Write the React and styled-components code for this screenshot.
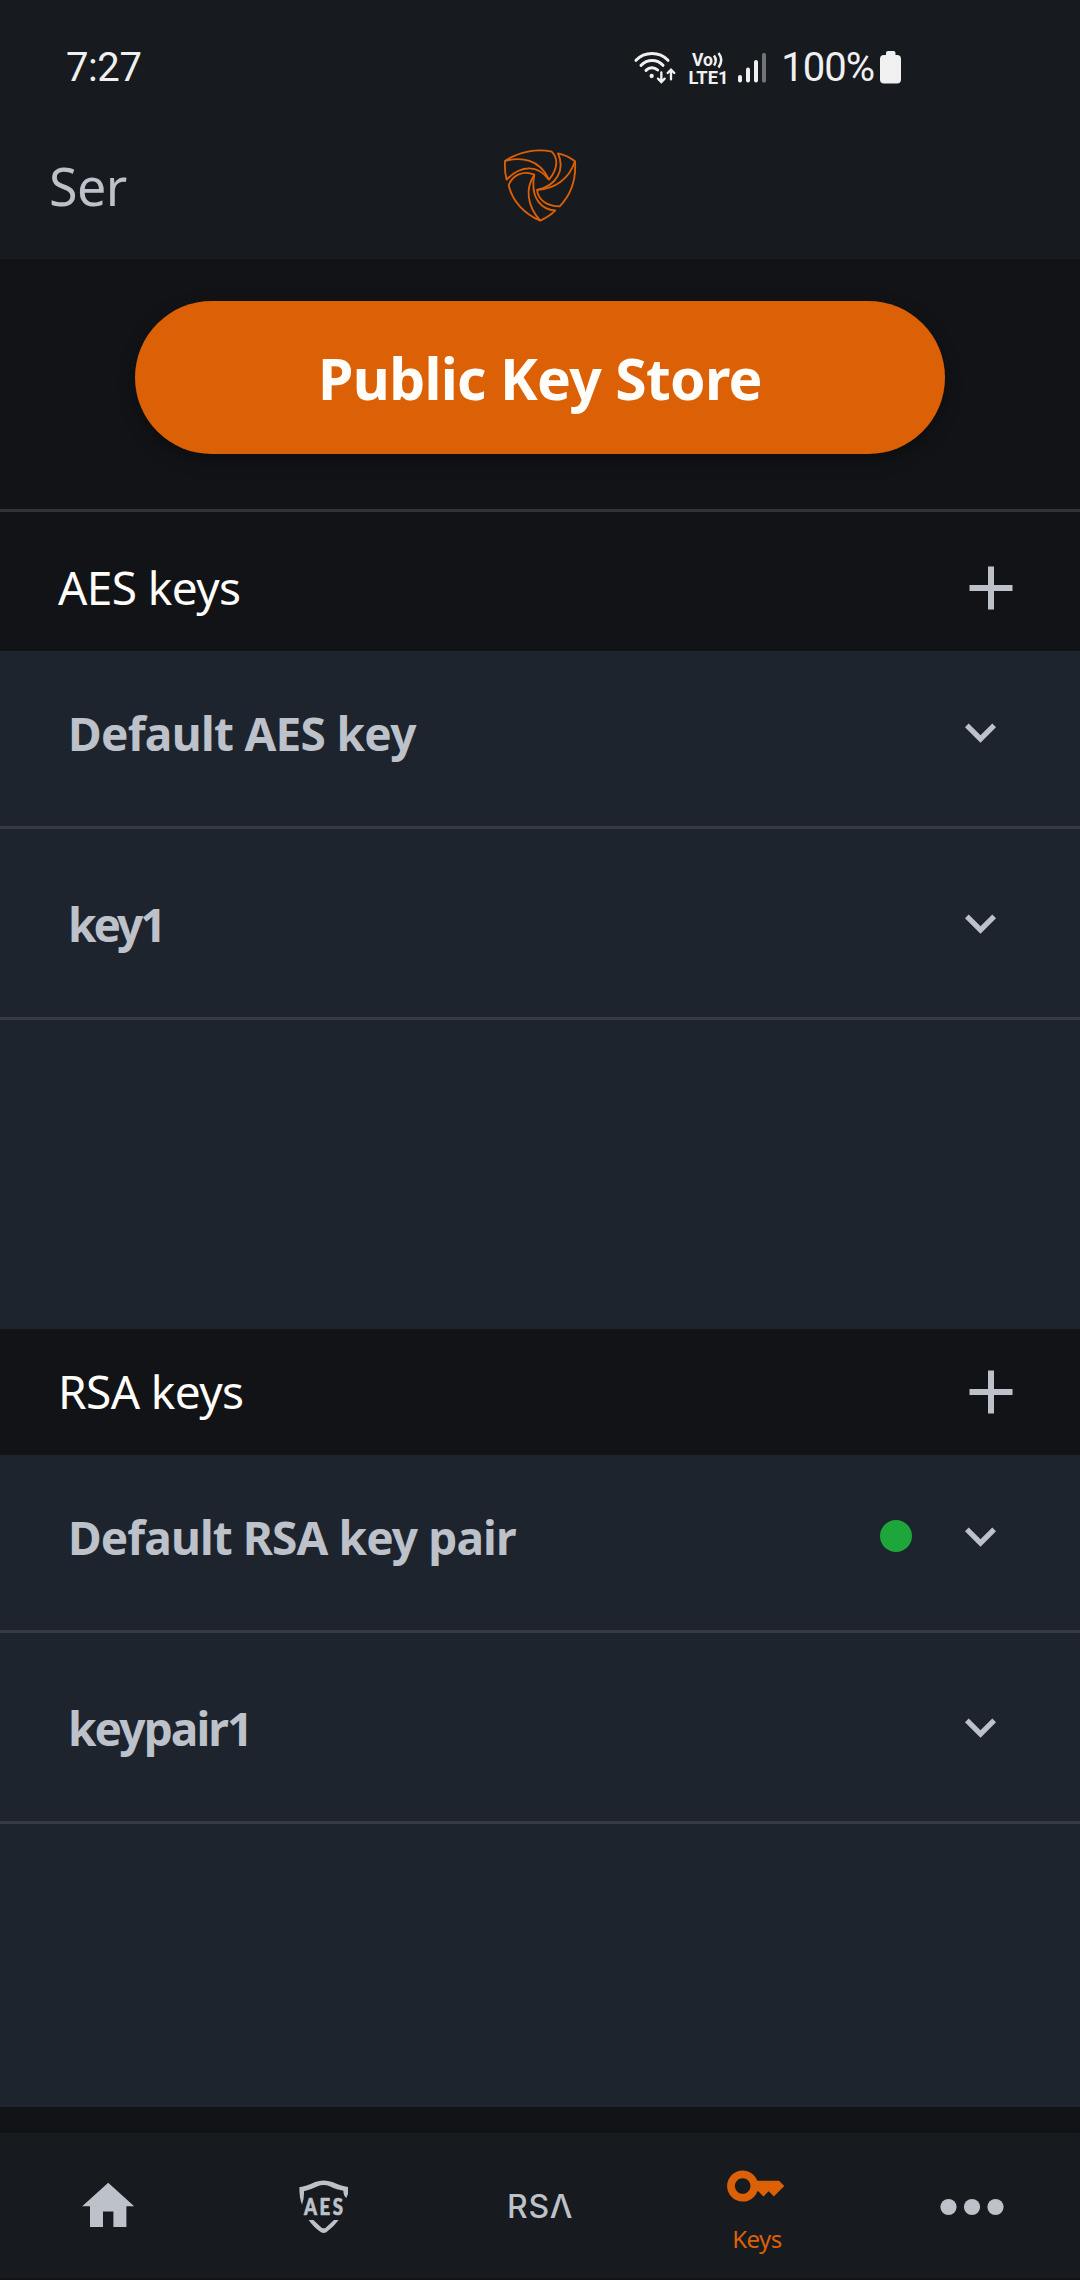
import React from "react";
import styled, { createGlobalStyle } from "styled-components";

const color = {
  bar: "#171a1e",
  page: "#121316",
  panel: "#1e242d",
  rule: "#323336",
  rowRule: "#363a42",
  text: "#bdc1c9",
  bright: "#fffdfa",
  accent: "#dc6006",
  ok: "#1ea63c",
};

const GlobalStyle = createGlobalStyle`
  * { box-sizing: border-box; }
  body { margin: 0; background: ${color.page}; }
  svg { display: block; flex: none; }
  button { border: 0; padding: 0; background: none; font: inherit; color: inherit; }
`;

const Screen = styled.div`
  width: 1080px;
  height: 2280px;
  display: flex;
  flex-direction: column;
  overflow: hidden;
  background: ${color.page};
  color: ${color.text};
  font-family: "Noto Sans", "Open Sans", sans-serif;
`;

const TopArea = styled.header`
  height: 259px;
  flex: none;
  background: ${color.bar};
`;

const StatusBar = styled.div`
  height: 134px;
  padding: 1px 179px 0 66px;
  display: flex;
  align-items: center;
  justify-content: space-between;
  font-family: Roboto, sans-serif;
  font-size: 40px;
  color: #f0f0f0;
`;

const StatusText = styled.span`
  line-height: 48px;
  padding-top: 1px;
  letter-spacing: ${(p) => p.$spacing || "-0.4px"};
`;

const StatusIcons = styled.div`
  display: flex;
  align-items: center;
`;

const StatusSvg = styled.svg`
  margin-right: ${(p) => p.$gap}px;
  overflow: visible;
`;

const BatterySvg = styled.svg`
  margin-left: 6px;
`;

const TitleBar = styled.div`
  height: 102px;
  padding: 0 49px;
  display: grid;
  grid-template-columns: 1fr auto 1fr;
  align-items: center;
`;

const BackLabel = styled.span`
  padding-top: 1px;
  font-size: 52px;
  line-height: 100px;
  letter-spacing: -0.6px;
`;

const Actions = styled.section`
  height: 253px;
  flex: none;
  padding-top: 42px;
  display: flex;
  justify-content: center;
  align-items: flex-start;
  border-bottom: 3px solid ${color.rule};
`;

const StoreButton = styled.button`
  width: 810px;
  height: 153px;
  border-radius: 77px;
  background: ${color.accent};
  color: ${color.bright};
  font-size: 57px;
  font-weight: 700;
  letter-spacing: -0.7px;
  box-shadow: 0 6px 18px rgba(0, 0, 0, 0.3);
`;

const KeySection = styled.section`
  flex: none;
  padding-top: ${(p) => p.$offset || 0}px;
`;

const SectionHeader = styled.div`
  height: 126px;
  padding: 0 67px 0 58px;
  display: flex;
  align-items: center;
  justify-content: space-between;
`;

const SectionTitle = styled.h2`
  margin: 0 0 2px;
  font-size: 46px;
  font-weight: 400;
  line-height: 60px;
  letter-spacing: -0.6px;
  color: ${color.bright};
`;

const KeyList = styled.div`
  height: ${(p) => p.$height}px;
  overflow: hidden;
  background: ${color.panel};
`;

const KeyRow = styled.div`
  height: 191px;
  padding: 2px 84px 0 68px;
  display: flex;
  align-items: center;
  border-bottom: 3px solid ${color.rowRule};

  &:first-child {
    margin-top: -13px;
  }
`;

const KeyName = styled.span`
  flex: 1;
  font-size: 46px;
  font-weight: 700;
  line-height: 60px;
  letter-spacing: ${(p) => p.$spacing}px;
`;

const ActiveDot = styled.span`
  width: 32px;
  height: 32px;
  margin: 0 53px 2px 0;
  border-radius: 50%;
  background: ${color.ok};
`;

const BottomNav = styled.nav`
  height: 147px;
  flex: none;
  margin-top: 26px;
  padding-top: 2px;
  display: grid;
  grid-template-columns: repeat(5, 1fr);
  background: ${color.bar};
  border-bottom: 2px solid ${color.page};
`;

const NavItem = styled.button`
  display: flex;
  flex-direction: column;
  align-items: center;
  justify-content: center;
  color: ${(p) => (p.$active ? color.accent : color.text)};
`;

const NavLabel = styled.span`
  font-size: 24px;
  line-height: 32px;
  letter-spacing: -0.5px;
  margin: 20px 0 -11px 2px;
`;

const RsaMark = styled.span`
  font-family: Inter, sans-serif;
  font-size: 32px;
  font-weight: 500;
  line-height: 40px;
  letter-spacing: 0.6px;
`;

function WifiIcon() {
  return (
    <StatusSvg $gap={12} width="42" height="36" viewBox="105 60 126 108" fill="none" stroke="#f0f0f0" strokeWidth="9" strokeLinecap="round">
      <path d="M111 91C137 64 181 64 207 91M126 106C145 87 174 87 192 106M141 121C151 111 166 111 176 120" />
      <circle cx="158" cy="138" r="6.500" fill="#f0f0f0" stroke="none" />
      <path strokeWidth="7" d="M187 127V155M177 146L187 156L197 146M216 148V120M206 129L216 119L226 129" />
    </StatusSvg>
  );
}

function VolteIcon() {
  return (
    <StatusSvg $gap={8} width="42" height="38" viewBox="0 0 42 38" fill="#f0f0f0" fontFamily="Roboto, sans-serif" fontWeight="700">
      <text x="4" y="17" fontSize="18" textLength="21" lengthAdjust="spacingAndGlyphs">Vo</text>
      <path d="M26 6.500q3.500 5 0 10M30.500 4q5.500 7 0 14.500" fill="none" stroke="#f0f0f0" strokeWidth="2.500" />
      <text x="0.500" y="35" fontSize="18.500" textLength="40" lengthAdjust="spacingAndGlyphs">LTE1</text>
    </StatusSvg>
  );
}

function SignalIcon() {
  return (
    <StatusSvg $gap={15} width="28" height="30" viewBox="0 0 28 30" fill="#f0f0f0">
      <rect x="0" y="22" width="4" height="7.500" rx="2" />
      <rect x="8" y="14.500" width="4" height="15" rx="2" />
      <rect x="16" y="7" width="4" height="22.500" rx="2" />
      <rect x="24" y="0" width="4" height="29.500" rx="1.500" fill="#717477" />
    </StatusSvg>
  );
}

function BatteryIcon() {
  return (
    <BatterySvg width="21" height="33" viewBox="0 0 21 33" fill="#f0f0f0">
      <rect x="6" y="0" width="9.500" height="8" rx="2" />
      <rect x="0" y="4" width="21" height="28.500" rx="4" />
    </BatterySvg>
  );
}

function Logo() {
  return (
    <svg width="74" height="74" viewBox="71 54 222 222" fill="none" stroke={color.accent} strokeWidth="5.500" strokeLinejoin="round">
      <path d="M77 93C118 65 172 55 217 65C238 86 235 118 209 149C176 105 126 103 82 149C77 132 76 112 77 93Z" />
      <path d="M77 93C125 80 181 87 209 149" />
      <path d="M165 134C131 120 100 136 88 165C98 214 137 253 183 272C199 264 216 254 228 241C190 240 151 208 165 134Z" />
      <path d="M165 134C137 176 143 228 183 272" />
      <path d="M236 70C256 74 273 83 287 94C291 150 273 196 241 229C203 228 177 211 173 180C232 168 258 119 236 70Z" />
      <path d="M173 180C226 177 269 148 287 94" />
    </svg>
  );
}

function PlusIcon() {
  return (
    <svg width="44" height="44" viewBox="0 0 44 44" fill={color.text}>
      <path d="M19 .5h6V19h18.500v6H25v18.500h-6V25H.5v-6H19z" />
    </svg>
  );
}

function ChevronIcon() {
  return (
    <svg width="31" height="20" viewBox="0 0 31 20" fill={color.text}>
      <path d="M3.700 .5L15.500 12.300L27.300 .5L31 4.200L15.500 19.700L0 4.200z" />
    </svg>
  );
}

function HomeIcon() {
  return (
    <svg width="62.400" height="62.400" viewBox="0 0 24 24" fill="currentColor">
      <path d="M10 20v-6h4v6h5v-8h3L12 3 2 12h3v8z" />
    </svg>
  );
}

function AesIcon() {
  return (
    <svg width="50" height="54" viewBox="87 90 150 162" fill="currentColor">
      <path d="M88 112Q108 109 135 96Q161 87 187 96Q213 108 234 111V132L229 144Q220 136 220 122Q202 120 179 109Q161 101 143 109Q121 120 102 124Q103 144 96 164Q88 145 88 112Z" />
      <path d="M116 210H130L155 233Q161 237 167 233L192 210H206Q192 230 169 247Q161 251 153 247Q130 231 116 210Z" />
      <text transform="translate(102 195) scale(0.82 1)" fontFamily="Lato, sans-serif" fontWeight="900" fontSize="68" letterSpacing="9" stroke="currentColor" strokeWidth="2" strokeLinejoin="round">AES</text>
    </svg>
  );
}

function KeyIcon() {
  return (
    <svg width="62.400" height="34" viewBox="0.200 5.500 24 13" fill="currentColor">
      <path d="M21 10h-8.350C11.830 7.670 9.610 6 7 6c-3.310 0-6 2.690-6 6s2.690 6 6 6c2.610 0 4.830-1.670 5.650-4H13l2 2 2-2 2 2 4-4.040L21 10zM7 15c-1.650 0-3-1.350-3-3s1.350-3 3-3 3 1.350 3 3-1.350 3-3 3z" />
    </svg>
  );
}

function MoreIcon() {
  return (
    <svg width="64" height="18" viewBox="0 0 64 18" fill="currentColor">
      <circle cx="8.500" cy="9" r="8.100" />
      <circle cx="32" cy="9" r="8.100" />
      <circle cx="55.500" cy="9" r="8.100" />
    </svg>
  );
}

const sections = [
  {
    title: "AES keys",
    offset: 13,
    height: 678,
    keys: [
      { name: "Default AES key", spacing: -0.7 },
      { name: "key1", spacing: -3 },
    ],
  },
  {
    title: "RSA keys",
    offset: 0,
    height: 652,
    keys: [
      { name: "Default RSA key pair", spacing: -0.9, active: true },
      { name: "keypair1", spacing: -1.9 },
    ],
  },
];

export default function App() {
  return (
    <Screen>
      <GlobalStyle />
      <TopArea>
        <StatusBar>
          <StatusText>7:27</StatusText>
          <StatusIcons>
            <WifiIcon />
            <VolteIcon />
            <SignalIcon />
            <StatusText $spacing="-1px">100%</StatusText>
            <BatteryIcon />
          </StatusIcons>
        </StatusBar>
        <TitleBar>
          <BackLabel>Ser</BackLabel>
          <Logo />
          <span />
        </TitleBar>
      </TopArea>
      <Actions>
        <StoreButton>Public Key Store</StoreButton>
      </Actions>
      {sections.map((section) => (
        <KeySection key={section.title} $offset={section.offset}>
          <SectionHeader>
            <SectionTitle>{section.title}</SectionTitle>
            <PlusIcon />
          </SectionHeader>
          <KeyList $height={section.height}>
            {section.keys.map((item) => (
              <KeyRow key={item.name}>
                <KeyName $spacing={item.spacing}>{item.name}</KeyName>
                {item.active && <ActiveDot />}
                <ChevronIcon />
              </KeyRow>
            ))}
          </KeyList>
        </KeySection>
      ))}
      <BottomNav>
        <NavItem><HomeIcon /></NavItem>
        <NavItem><AesIcon /></NavItem>
        <NavItem><RsaMark>RSΛ</RsaMark></NavItem>
        <NavItem $active>
          <KeyIcon />
          <NavLabel>Keys</NavLabel>
        </NavItem>
        <NavItem><MoreIcon /></NavItem>
      </BottomNav>
    </Screen>
  );
}
